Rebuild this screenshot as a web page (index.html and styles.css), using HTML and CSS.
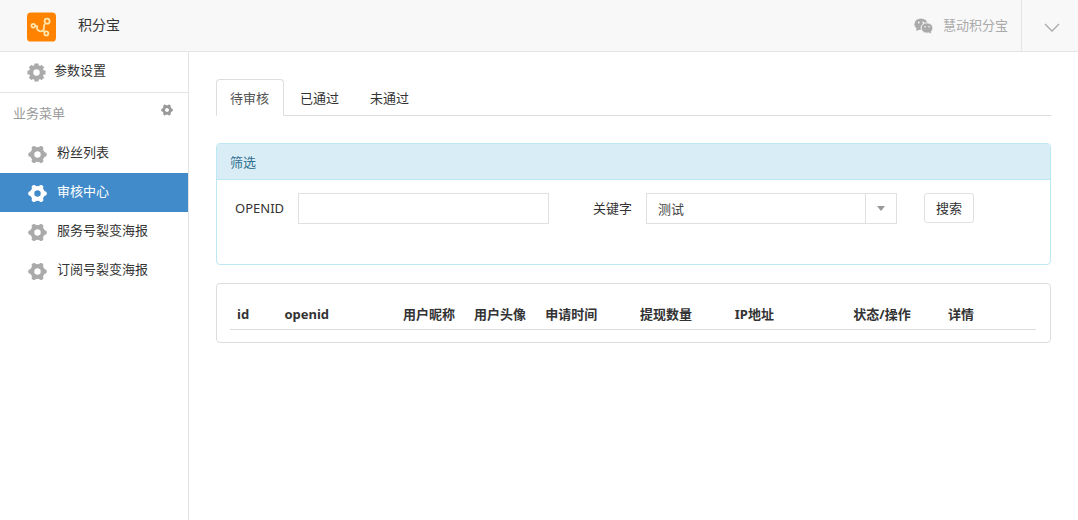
FILE: index.html
```html
<!DOCTYPE html>
<html lang="zh-CN">
<head>
    <meta charset="UTF-8">
    <meta name="viewport" content="width=device-width, initial-scale=1.0">
    <title>积分宝</title>
    <link rel="stylesheet" href="styles.css">
</head>
<body>
    <svg class="sprite" aria-hidden="true">
        <symbol id="gear" viewBox="0 0 20 20">
            <circle cx="10" cy="10" r="5.6" fill="none" stroke="currentColor" stroke-width="4.4"/>
            <path d="M10 5V.5M10 15v4.500M5 10H.5M15 10h4.500M6 6L3.300 3.300M14 6l2.700-2.700M6 14l-2.700 2.700M14 14l2.700 2.700" stroke="currentColor" stroke-width="4.4"/>
        </symbol>
        <symbol id="cog" viewBox="0 0 20 20">
            <circle cx="10" cy="10" r="5.6" fill="none" stroke="currentColor" stroke-width="4.4"/>
            <path d="M16 10h1.400M4 10H2.600M13 4.800l.7-1.200M7 4.800L6.300 3.600M13 15.200l.7 1.200M7 15.200l-.7 1.200" stroke="currentColor" stroke-width="5" stroke-linecap="round"/>
        </symbol>
    </svg>

    <header class="header">
        <svg class="logo" viewBox="0 0 30 30" aria-hidden="true">
            <rect width="30" height="30" rx="4" fill="#ff8300"/>
            <g fill="none" stroke="#ffe6ae" stroke-width="1.800">
                <circle cx="6.500" cy="13.700" r="1.900"/>
                <circle cx="20.800" cy="9" r="2.600"/>
                <circle cx="20" cy="21.700" r="2.100"/>
                <path d="M11 13.500a3.700 3.700 0 1 0 6.600 1.500c-.2-1.200 0-2 .8-3M8.600 13.900l2 .2M16.800 18.600l1.500 1.300"/>
            </g>
        </svg>
        <h1 class="title">积分宝</h1>
        <a href="#" class="account">
            <svg class="wechat" viewBox="0 0 19 16" aria-hidden="true">
                <ellipse cx="7" cy="6.200" rx="6.600" ry="5.800" fill="#aaa"/>
                <path d="M2.500 9.500L2.300 13l3.500-1.600z" fill="#aaa"/>
                <ellipse cx="13" cy="10" rx="6" ry="5.200" fill="#aaa" stroke="#f8f8f8" stroke-width="1"/>
                <path d="M14.500 14l2.700 1.800-.3-3z" fill="#aaa"/>
                <g fill="#f8f8f8">
                    <circle cx="4.800" cy="4.500" r=".9"/>
                    <circle cx="9.200" cy="4.500" r=".9"/>
                    <circle cx="11" cy="8.700" r=".8"/>
                    <circle cx="15" cy="8.700" r=".8"/>
                </g>
            </svg>
            慧动积分宝
        </a>
        <button type="button" class="toggle" aria-label="展开">
            <svg class="chevron" viewBox="0 0 16 10" aria-hidden="true">
                <path d="M1 1l7 7 7-7" fill="none" stroke="#aaa" stroke-width="1.300"/>
            </svg>
        </button>
    </header>

    <div class="wrapper">
        <nav class="sidebar">
            <a href="#" class="setting"><svg class="icon"><use href="#gear"/></svg>参数设置</a>
            <div class="menu-title">
                <span>业务菜单</span>
                <svg class="icon-small"><use href="#cog"/></svg>
            </div>
            <ul class="menu">
                <li><a href="#"><svg class="icon"><use href="#cog"/></svg>粉丝列表</a></li>
                <li><a href="#" class="active"><svg class="icon"><use href="#cog"/></svg>审核中心</a></li>
                <li><a href="#"><svg class="icon"><use href="#cog"/></svg>服务号裂变海报</a></li>
                <li><a href="#"><svg class="icon"><use href="#cog"/></svg>订阅号裂变海报</a></li>
            </ul>
        </nav>

        <main class="content">
            <ul class="tabs">
                <li><a href="#" class="active">待审核</a></li>
                <li><a href="#">已通过</a></li>
                <li><a href="#">未通过</a></li>
            </ul>

            <section class="panel panel-info">
                <h2 class="panel-heading">筛选</h2>
                <form class="filter">
                    <label for="openid">OPENID</label>
                    <div class="input-box">
                        <input type="text" id="openid" class="field">
                    </div>
                    <label for="keyword" class="label-keyword">关键字</label>
                    <div class="input-box">
                        <select id="keyword" class="field">
                            <option>测试</option>
                        </select>
                        <span class="caret"></span>
                    </div>
                    <button type="button" class="btn">搜索</button>
                </form>
            </section>

            <section class="panel panel-list">
                <table class="table">
                    <thead>
                        <tr>
                            <th class="col-4">id</th>
                            <th class="col-10">openid</th>
                            <th class="col-6">用户昵称</th>
                            <th class="col-6">用户头像</th>
                            <th class="col-8">申请时间</th>
                            <th class="col-8">提现数量</th>
                            <th class="col-10">IP地址</th>
                            <th class="col-8">状态/操作</th>
                            <th class="col-8">详情</th>
                        </tr>
                    </thead>
                </table>
            </section>
        </main>
    </div>
</body>
</html>
```
FILE: styles.css
```css
* {
    box-sizing: border-box;
}
body {
    margin: 0;
    min-height: 100vh;
    display: flex;
    flex-direction: column;
    font-family: "Noto Sans", "Noto Sans CJK SC", sans-serif;
    font-size: 13px;
    line-height: 18px;
    color: #333;
    background-color: #fff;
}
a {
    color: inherit;
    text-decoration: none;
}
ul {
    list-style: none;
    margin: 0;
    padding: 0;
}
.sprite {
    display: none;
}

/* header */
.header {
    display: flex;
    align-items: center;
    height: 52px;
    padding: 0 0 2px 27px;
    background-color: #f8f8f8;
    border-bottom: 1px solid #e4e4e4;
}
.logo {
    width: 29px;
    height: 30px;
    margin-top: 4px;
}
.title {
    flex: 1;
    margin: 0 0 0 22px;
    font-size: 14px;
    font-weight: normal;
}
.account {
    display: flex;
    align-items: center;
    gap: 10px;
    padding-right: 13px;
    color: #aaa;
}
.wechat {
    width: 19px;
    height: 16px;
    margin-top: 2px;
}
.toggle {
    align-self: stretch;
    width: 57px;
    margin-bottom: -2px;
    padding: 6px 0 0 4px;
    background: none;
    border: none;
    border-left: 1px solid #e4e4e4;
}
.chevron {
    width: 16px;
    height: 10px;
}

/* sidebar */
.wrapper {
    display: flex;
    flex: 1;
}
.sidebar {
    width: 189px;
    flex-shrink: 0;
    border-right: 1px solid #e4e4e4;
}
.setting {
    display: flex;
    gap: 8px;
    height: 41px;
    padding: 9px 0 0 27px;
    border-bottom: 1px solid #e4e4e4;
}
.icon {
    width: 19px;
    height: 19px;
    margin-top: 2px;
    color: #aaa;
}
.icon-small {
    width: 12px;
    height: 12px;
    color: #999;
}
.menu-title {
    display: flex;
    justify-content: space-between;
    padding: 11px 15px 12px 13px;
    color: #999;
}
.menu a {
    display: flex;
    gap: 10px;
    height: 39px;
    padding: 9px 0 0 28px;
}
.menu .active,
.menu .active .icon {
    color: #fff;
}
.menu .active {
    background-color: #428bca;
}

/* content */
.content {
    flex: 1;
    padding: 27px;
}
.tabs {
    display: flex;
    gap: 2px;
    margin-bottom: 27px;
    border-bottom: 1px solid #ddd;
}
.tabs a {
    display: block;
    height: 37px;
    margin-bottom: -1px;
    padding: 9px 14px 9px 13px;
    border: 1px solid transparent;
    border-radius: 4px 4px 0 0;
}
.tabs .active {
    color: #555;
    background-color: #fff;
    border-color: #ddd;
    border-bottom-color: #fff;
}
.panel {
    margin-bottom: 18px;
    border: 1px solid #ddd;
    border-radius: 4px;
}
.panel-info {
    border-color: #bce8f1;
}
.panel-heading {
    margin: 0;
    padding: 9px 13px 8px;
    font-size: 13px;
    font-weight: normal;
    color: #31708f;
    background-color: #d9edf7;
    border-bottom: 1px solid #bce8f1;
    border-radius: 3px 3px 0 0;
}
.filter {
    display: flex;
    align-items: flex-start;
    padding: 13px 76px 40px 18px;
}
.filter label {
    padding-top: 6px;
}
.label-keyword {
    margin-left: 44px;
}
.input-box {
    flex: 1;
    position: relative;
    margin-left: 14px;
}
.field {
    display: block;
    width: 100%;
    height: 31px;
    margin: 0;
    padding: 0 11px;
    font: inherit;
    color: #444;
    background-color: #fff;
    border: 1px solid #e0e0e0;
    border-radius: 0;
    appearance: none;
}
.caret {
    position: absolute;
    top: 1px;
    right: 1px;
    bottom: 1px;
    width: 31px;
    display: flex;
    align-items: center;
    justify-content: center;
    border-left: 1px solid #e0e0e0;
    pointer-events: none;
}
.caret::after {
    content: "";
    border: 4px solid transparent;
    border-top: 5px solid #999;
    border-bottom: 0;
}
.btn {
    height: 30px;
    margin-left: 27px;
    padding: 0 11px;
    font: inherit;
    color: #333;
    background-color: #fff;
    border: 1px solid #e0e0e0;
    border-radius: 3px;
}
.panel-list {
    padding: 13px 14px 12px 13px;
}
.table {
    width: 100%;
    table-layout: fixed;
    border-collapse: collapse;
}
.table th {
    padding: 8px 6px 6px 7px;
    line-height: 18px;
    text-align: left;
    white-space: nowrap;
    border-bottom: 1px solid #ddd;
}
/* widths are parts of 68 */
.col-4 {
    width: calc(100% * 4 / 68);
}
.col-6 {
    width: calc(100% * 6 / 68);
}
.col-8 {
    width: calc(100% * 8 / 68);
}
.col-10 {
    width: calc(100% * 10 / 68);
}
```
